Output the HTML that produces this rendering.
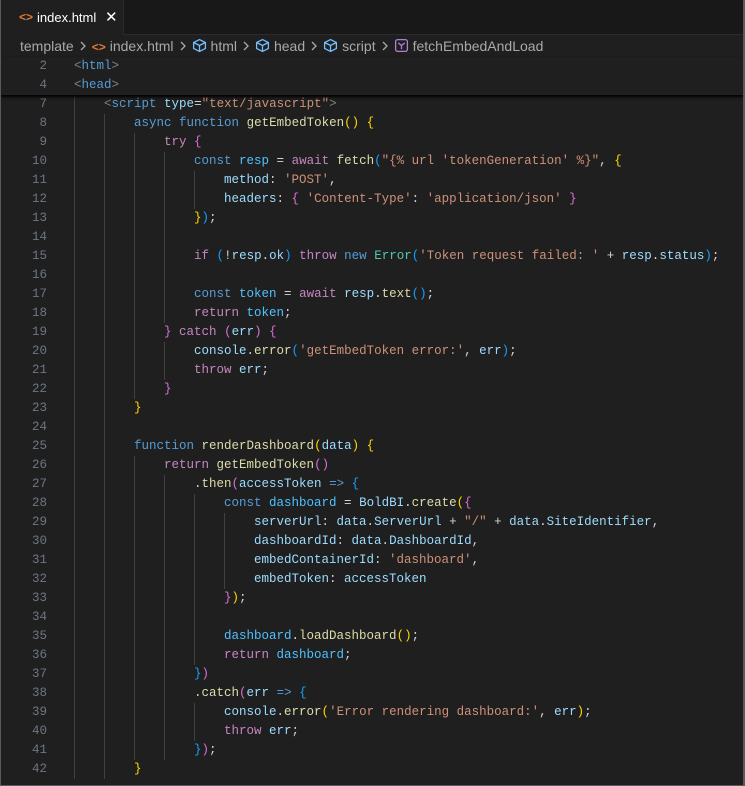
<!DOCTYPE html>
<html style="width:745px;height:786px;overflow:hidden"><head><meta charset="utf-8"><style>
*{margin:0;padding:0;box-sizing:border-box}
body{width:745px;height:786px;background:#1f1f1f;overflow:hidden;position:relative;font-family:"Liberation Sans",sans-serif}
#frame{position:absolute;left:0;top:0;width:745px;height:786px;border:1px solid #5a5a5a;border-top:none;border-right:2px solid #5a5a5a;pointer-events:none;z-index:10}
#tabs{position:absolute;left:0;top:0;width:745px;height:35px;background:#181818;border-bottom:1px solid #2b2b2b}
#tab{position:absolute;left:1px;top:0;width:123px;height:35px;background:#1f1f1f;border-right:1px solid #2b2b2b;color:#fff;font-size:13px;line-height:35px}
#tab .ic{position:absolute;left:18px;top:0;color:#e37933;font-size:12px;font-weight:bold}
#tab .nm{position:absolute;left:36px}
#tab .x{position:absolute;left:104px;top:0;font-size:15px}
#bc{position:absolute;left:20px;top:36px;height:21px;line-height:21px;font-size:14px;color:#a9a9a9;white-space:nowrap}
.sep{display:inline-block;margin:0 5px 0 5px;vertical-align:-1px}
.cube{display:inline-block;vertical-align:-2px;margin-right:4px}
#code{position:absolute;left:0;top:57px;width:745px;font-family:"Liberation Mono",monospace;font-size:12.5px;color:#d4d4d4}
.l{height:19px;line-height:19px;white-space:pre;position:relative}
.n{display:inline-block;width:47px;text-align:right;color:#6e7681}
.cd{position:absolute;left:74px;top:0}
.g{display:inline-block;width:30px;height:19px;vertical-align:top;box-shadow:inset 1px 0 #404040}
#sticky{position:relative;background:#1f1f1f;box-shadow:0 2px 3px #000;z-index:2}
.k{color:#569cd6}.c{color:#c586c0}.f{color:#dcdcaa}.v{color:#9cdcfe}.s{color:#ce9178}.t{color:#4ec9b0}.o{color:#4fc1ff}.p{color:#808080}
.b1{color:#ffd700}.b2{color:#da70d6}.b3{color:#179fff}
</style></head><body>
<div id="tabs"><div id="tab"><span class="ic">&lt;&gt;</span><span class="nm">index.html</span><span class="x">✕</span></div></div>
<div id="bc">template<svg class="sep" width="8" height="12" viewBox="0 0 8 12"><path d="M2 2L6 6L2 10" fill="none" stroke="#a9a9a9" stroke-width="1.3"/></svg><span style="color:#e37933;font-weight:bold;font-size:12px;margin-right:4px">&lt;&gt;</span>index.html<svg class="sep" width="8" height="12" viewBox="0 0 8 12"><path d="M2 2L6 6L2 10" fill="none" stroke="#a9a9a9" stroke-width="1.3"/></svg><svg class="cube" width="15" height="15" viewBox="0 0 14 14"><path d="M7 1.5L12.5 4.2V9.8L7 12.5L1.5 9.8V4.2Z M1.5 4.2L7 7L12.5 4.2 M7 7V12.5" fill="none" stroke="#75beff" stroke-width="1.2"/></svg>html<svg class="sep" width="8" height="12" viewBox="0 0 8 12"><path d="M2 2L6 6L2 10" fill="none" stroke="#a9a9a9" stroke-width="1.3"/></svg><svg class="cube" width="15" height="15" viewBox="0 0 14 14"><path d="M7 1.5L12.5 4.2V9.8L7 12.5L1.5 9.8V4.2Z M1.5 4.2L7 7L12.5 4.2 M7 7V12.5" fill="none" stroke="#75beff" stroke-width="1.2"/></svg>head<svg class="sep" width="8" height="12" viewBox="0 0 8 12"><path d="M2 2L6 6L2 10" fill="none" stroke="#a9a9a9" stroke-width="1.3"/></svg><svg class="cube" width="15" height="15" viewBox="0 0 14 14"><path d="M7 1.5L12.5 4.2V9.8L7 12.5L1.5 9.8V4.2Z M1.5 4.2L7 7L12.5 4.2 M7 7V12.5" fill="none" stroke="#75beff" stroke-width="1.2"/></svg>script<svg class="sep" width="8" height="12" viewBox="0 0 8 12"><path d="M2 2L6 6L2 10" fill="none" stroke="#a9a9a9" stroke-width="1.3"/></svg><svg class="cube" width="15" height="15" viewBox="0 0 14 14"><rect x="1.5" y="1.5" width="11" height="11" rx="2" fill="none" stroke="#b180d7" stroke-width="1.2"/><path d="M4 4.5L7 7L10 4.5 M7 7V10.5" fill="none" stroke="#b180d7" stroke-width="1.2"/></svg>fetchEmbedAndLoad</div>
<div id="code">
<div id="sticky">
<div class="l"><span class="n">2</span><span class="cd"><span class="p">&lt;</span><span class="k">html</span><span class="p">&gt;</span></span></div>
<div class="l"><span class="n">4</span><span class="cd"><span class="p">&lt;</span><span class="k">head</span><span class="p">&gt;</span></span></div>
</div>
<div class="l"><span class="n">7</span><span class="cd"><i class="g"></i><span class="p">&lt;</span><span class="k">script</span> <span class="v">type</span>=<span class="s">"text/javascript"</span><span class="p">&gt;</span></span></div>
<div class="l"><span class="n">8</span><span class="cd"><i class="g"></i><i class="g"></i><span class="k">async</span> <span class="k">function</span> <span class="f">getEmbedToken</span><span class="b1">()</span> <span class="b1">{</span></span></div>
<div class="l"><span class="n">9</span><span class="cd"><i class="g"></i><i class="g"></i><i class="g"></i><span class="c">try</span> <span class="b2">{</span></span></div>
<div class="l"><span class="n">10</span><span class="cd"><i class="g"></i><i class="g"></i><i class="g"></i><i class="g"></i><span class="k">const</span> <span class="o">resp</span> = <span class="c">await</span> <span class="f">fetch</span><span class="b3">(</span><span class="s">"{% url 'tokenGeneration' %}"</span>, <span class="b1">{</span></span></div>
<div class="l"><span class="n">11</span><span class="cd"><i class="g"></i><i class="g"></i><i class="g"></i><i class="g"></i><i class="g"></i><span class="v">method</span>: <span class="s">'POST'</span>,</span></div>
<div class="l"><span class="n">12</span><span class="cd"><i class="g"></i><i class="g"></i><i class="g"></i><i class="g"></i><i class="g"></i><span class="v">headers</span>: <span class="b2">{</span> <span class="s">'Content-Type'</span>: <span class="s">'application/json'</span> <span class="b2">}</span></span></div>
<div class="l"><span class="n">13</span><span class="cd"><i class="g"></i><i class="g"></i><i class="g"></i><i class="g"></i><span class="b1">}</span><span class="b3">)</span>;</span></div>
<div class="l"><span class="n">14</span><span class="cd"><i class="g"></i><i class="g"></i><i class="g"></i><i class="g"></i></span></div>
<div class="l"><span class="n">15</span><span class="cd"><i class="g"></i><i class="g"></i><i class="g"></i><i class="g"></i><span class="c">if</span> <span class="b3">(</span>!<span class="v">resp</span>.<span class="v">ok</span><span class="b3">)</span> <span class="c">throw</span> <span class="k">new</span> <span class="t">Error</span><span class="b3">(</span><span class="s">'Token request failed: '</span> + <span class="v">resp</span>.<span class="v">status</span><span class="b3">)</span>;</span></div>
<div class="l"><span class="n">16</span><span class="cd"><i class="g"></i><i class="g"></i><i class="g"></i><i class="g"></i></span></div>
<div class="l"><span class="n">17</span><span class="cd"><i class="g"></i><i class="g"></i><i class="g"></i><i class="g"></i><span class="k">const</span> <span class="o">token</span> = <span class="c">await</span> <span class="v">resp</span>.<span class="f">text</span><span class="b3">()</span>;</span></div>
<div class="l"><span class="n">18</span><span class="cd"><i class="g"></i><i class="g"></i><i class="g"></i><i class="g"></i><span class="c">return</span> <span class="o">token</span>;</span></div>
<div class="l"><span class="n">19</span><span class="cd"><i class="g"></i><i class="g"></i><i class="g"></i><span class="b2">}</span> <span class="c">catch</span> <span class="b2">(</span><span class="v">err</span><span class="b2">)</span> <span class="b2">{</span></span></div>
<div class="l"><span class="n">20</span><span class="cd"><i class="g"></i><i class="g"></i><i class="g"></i><i class="g"></i><span class="v">console</span>.<span class="f">error</span><span class="b3">(</span><span class="s">'getEmbedToken error:'</span>, <span class="v">err</span><span class="b3">)</span>;</span></div>
<div class="l"><span class="n">21</span><span class="cd"><i class="g"></i><i class="g"></i><i class="g"></i><i class="g"></i><span class="c">throw</span> <span class="v">err</span>;</span></div>
<div class="l"><span class="n">22</span><span class="cd"><i class="g"></i><i class="g"></i><i class="g"></i><span class="b2">}</span></span></div>
<div class="l"><span class="n">23</span><span class="cd"><i class="g"></i><i class="g"></i><span class="b1">}</span></span></div>
<div class="l"><span class="n">24</span><span class="cd"><i class="g"></i><i class="g"></i></span></div>
<div class="l"><span class="n">25</span><span class="cd"><i class="g"></i><i class="g"></i><span class="k">function</span> <span class="f">renderDashboard</span><span class="b1">(</span><span class="v">data</span><span class="b1">)</span> <span class="b1">{</span></span></div>
<div class="l"><span class="n">26</span><span class="cd"><i class="g"></i><i class="g"></i><i class="g"></i><span class="c">return</span> <span class="f">getEmbedToken</span><span class="b2">()</span></span></div>
<div class="l"><span class="n">27</span><span class="cd"><i class="g"></i><i class="g"></i><i class="g"></i><i class="g"></i>.<span class="f">then</span><span class="b2">(</span><span class="v">accessToken</span> <span class="k">=&gt;</span> <span class="b3">{</span></span></div>
<div class="l"><span class="n">28</span><span class="cd"><i class="g"></i><i class="g"></i><i class="g"></i><i class="g"></i><i class="g"></i><span class="k">const</span> <span class="o">dashboard</span> = <span class="v">BoldBI</span>.<span class="f">create</span><span class="b1">(</span><span class="b2">{</span></span></div>
<div class="l"><span class="n">29</span><span class="cd"><i class="g"></i><i class="g"></i><i class="g"></i><i class="g"></i><i class="g"></i><i class="g"></i><span class="v">serverUrl</span>: <span class="v">data</span>.<span class="v">ServerUrl</span> + <span class="s">"/"</span> + <span class="v">data</span>.<span class="v">SiteIdentifier</span>,</span></div>
<div class="l"><span class="n">30</span><span class="cd"><i class="g"></i><i class="g"></i><i class="g"></i><i class="g"></i><i class="g"></i><i class="g"></i><span class="v">dashboardId</span>: <span class="v">data</span>.<span class="v">DashboardId</span>,</span></div>
<div class="l"><span class="n">31</span><span class="cd"><i class="g"></i><i class="g"></i><i class="g"></i><i class="g"></i><i class="g"></i><i class="g"></i><span class="v">embedContainerId</span>: <span class="s">'dashboard'</span>,</span></div>
<div class="l"><span class="n">32</span><span class="cd"><i class="g"></i><i class="g"></i><i class="g"></i><i class="g"></i><i class="g"></i><i class="g"></i><span class="v">embedToken</span>: <span class="v">accessToken</span></span></div>
<div class="l"><span class="n">33</span><span class="cd"><i class="g"></i><i class="g"></i><i class="g"></i><i class="g"></i><i class="g"></i><span class="b2">}</span><span class="b1">)</span>;</span></div>
<div class="l"><span class="n">34</span><span class="cd"><i class="g"></i><i class="g"></i><i class="g"></i><i class="g"></i><i class="g"></i></span></div>
<div class="l"><span class="n">35</span><span class="cd"><i class="g"></i><i class="g"></i><i class="g"></i><i class="g"></i><i class="g"></i><span class="o">dashboard</span>.<span class="f">loadDashboard</span><span class="b1">()</span>;</span></div>
<div class="l"><span class="n">36</span><span class="cd"><i class="g"></i><i class="g"></i><i class="g"></i><i class="g"></i><i class="g"></i><span class="c">return</span> <span class="o">dashboard</span>;</span></div>
<div class="l"><span class="n">37</span><span class="cd"><i class="g"></i><i class="g"></i><i class="g"></i><i class="g"></i><span class="b3">}</span><span class="b2">)</span></span></div>
<div class="l"><span class="n">38</span><span class="cd"><i class="g"></i><i class="g"></i><i class="g"></i><i class="g"></i>.<span class="f">catch</span><span class="b2">(</span><span class="v">err</span> <span class="k">=&gt;</span> <span class="b3">{</span></span></div>
<div class="l"><span class="n">39</span><span class="cd"><i class="g"></i><i class="g"></i><i class="g"></i><i class="g"></i><i class="g"></i><span class="v">console</span>.<span class="f">error</span><span class="b1">(</span><span class="s">'Error rendering dashboard:'</span>, <span class="v">err</span><span class="b1">)</span>;</span></div>
<div class="l"><span class="n">40</span><span class="cd"><i class="g"></i><i class="g"></i><i class="g"></i><i class="g"></i><i class="g"></i><span class="c">throw</span> <span class="v">err</span>;</span></div>
<div class="l"><span class="n">41</span><span class="cd"><i class="g"></i><i class="g"></i><i class="g"></i><i class="g"></i><span class="b3">}</span><span class="b2">)</span>;</span></div>
<div class="l"><span class="n">42</span><span class="cd"><i class="g"></i><i class="g"></i><span class="b1">}</span></span></div>
</div>
<div id="frame"></div>
</body></html>
